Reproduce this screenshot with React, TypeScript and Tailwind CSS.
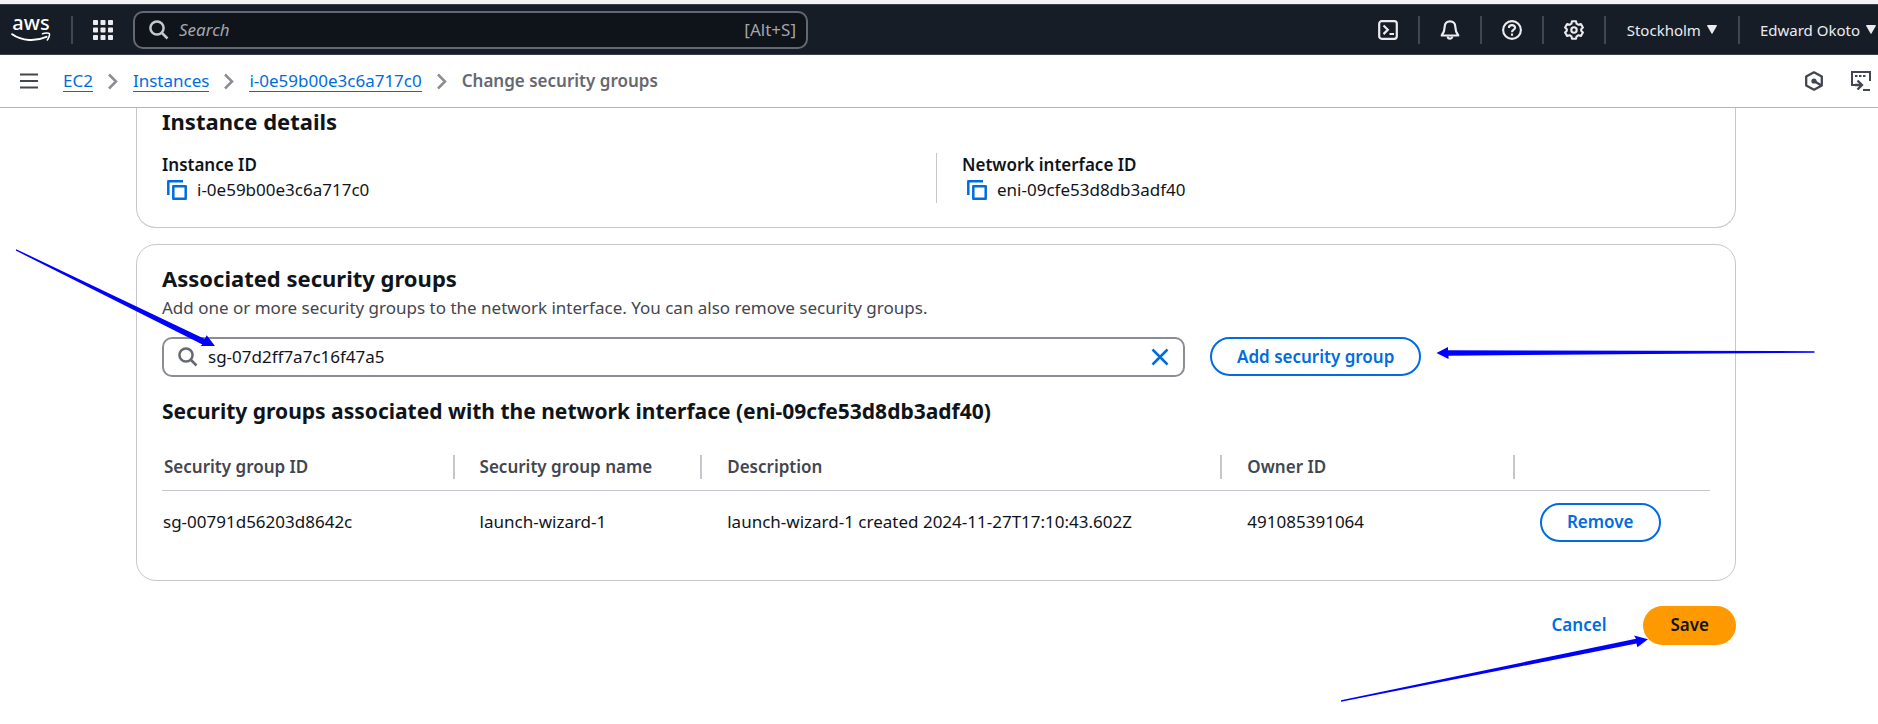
import React from "react";

const groups = [
  {
    id: "sg-00791d56203d8642c",
    name: "launch-wizard-1",
    description: "launch-wizard-1 created 2024-11-27T17:10:43.602Z",
    owner: "491085391064",
  },
];

function AwsLogo() {
  return (
    <a href="#home" aria-label="AWS home" className="flex w-10 flex-col items-center text-white">
      <span className="font-['Noto_Sans'] text-[20px] leading-[14px] font-medium">aws</span>
      <svg width="40" height="11" viewBox="0 0 40 11" fill="none" stroke="currentColor" className="mt-0.5">
        <path d="M1.2 2.2C11 9.2 24.500 9.600 35.500 4.800" strokeWidth="2" strokeLinecap="round" />
        <path d="M31.500 1.700C34 .8 37.500 .8 38.300 1.500C39 2.300 38 6 36.300 8" strokeWidth="1.600" strokeLinecap="round" />
      </svg>
    </a>
  );
}

function GridIcon() {
  const at = [0, 7.5, 15];
  return (
    <svg width="20" height="20" viewBox="0 0 20 20" fill="#ebebf0">
      {at.map((y) => at.map((x) => <rect key={`${x}-${y}`} x={x} y={y} width="5" height="5" rx=".8" />))}
    </svg>
  );
}

function SearchIcon({ className }: { className: string }) {
  return (
    <svg width="20" height="20" viewBox="0 0 20 20" fill="none" stroke="currentColor" strokeWidth="2.500" className={className}>
      <circle cx="8" cy="8" r="6.600" />
      <path d="M12.500 12.500l6 6" />
    </svg>
  );
}

function Chevron() {
  return (
    <svg width="10" height="17" viewBox="0 0 10 17" fill="none" stroke="#8c8c94" strokeWidth="2.500" className="shrink-0">
      <path d="M1 1.500l7 7-7 7" />
    </svg>
  );
}

function Caret() {
  return (
    <svg width="10" height="9" viewBox="0 0 10 9" fill="currentColor">
      <path d="M.8 0h8.400a.7.7 0 0 1 .6 1L5.600 8.300a.7.7 0 0 1-1.200 0L.2 1a.7.7 0 0 1 .6-1z" />
    </svg>
  );
}

function CopyIcon() {
  return (
    <svg width="20" height="20" viewBox="0 0 20 20" fill="none" stroke="#006ce0" strokeWidth="2.500" strokeLinejoin="round">
      <path d="M1.300 15V1.300H16" />
      <rect x="6.300" y="6.300" width="12.400" height="12.400" />
    </svg>
  );
}

function TerminalIcon() {
  return (
    <svg width="20" height="20" viewBox="0 0 20 20" fill="none" stroke="currentColor" strokeWidth="2.200">
      <rect x="1.200" y="1.200" width="17.600" height="17.600" rx="2.500" />
      <path d="M5.500 5.500l4.300 4.300-4.300 4.300M11.500 14h4.500" />
    </svg>
  );
}

function BellIcon() {
  return (
    <svg width="20" height="20" viewBox="0 0 20 20" fill="none" stroke="currentColor" strokeWidth="2.200" strokeLinejoin="round">
      <path d="M10 1.300C6.800 1.300 4.700 3.600 4.700 6.700C4.700 10.500 3.800 12.500 1.700 15.500H18.300C16.200 12.500 15.300 10.500 15.300 6.700C15.300 3.600 13.200 1.300 10 1.300z" />
      <path d="M7.800 16.500a2.200 2.200 0 0 0 4.400 0" />
    </svg>
  );
}

function HelpIcon() {
  return (
    <svg width="20" height="20" viewBox="0 0 20 20" fill="none" stroke="currentColor" strokeWidth="2.100">
      <circle cx="10" cy="10" r="8.900" />
      <path d="M6.900 8C6.900 6 8.200 5.100 10 5.100C11.900 5.100 13.100 6.200 13.100 7.700C13.100 9.800 10 9.700 10 12.300M10 13.600v2.200" />
    </svg>
  );
}

function GearIcon() {
  return (
    <svg width="20" height="20" viewBox="0 0 20 20" fill="none" stroke="currentColor" strokeWidth="2.100" strokeLinejoin="round">
      <path d="M8 1.200h4l.6 2.500 1.900 1.100 2.400-.8 2 3.500-1.700 1.700v1.600l1.700 1.700-2 3.500-2.400-.8-1.900 1.100-.6 2.500H8l-.6-2.500-1.900-1.100-2.400.8-2-3.500 1.700-1.700V9.200L1.100 7.500l2-3.500 2.400.8 1.900-1.100z" />
      <circle cx="10" cy="10" r="2.700" />
    </svg>
  );
}

function HexIcon() {
  return (
    <svg width="20" height="20" viewBox="0 0 20 20" fill="none" stroke="#424650" strokeWidth="2.300" strokeLinejoin="round">
      <path d="M10 1.300l7.800 4.300v8.800L10 18.700l-7.800-4.300V5.600z" />
      <circle cx="10" cy="10" r="2.600" fill="#424650" stroke="none" />
      <path d="M10 10l7 4.300" strokeWidth="2.500" />
    </svg>
  );
}

function ShellIcon() {
  return (
    <svg width="20" height="20" viewBox="0 0 20 20" fill="none" stroke="#424650" strokeWidth="2">
      <path d="M6 14H1V1h18v9" />
      <path d="M4 5h2.500M8 5h2.500M12 5h2.500" />
      <path d="M4 14h6M6.500 9.500l4.500 4.500-4.500 4.500" strokeWidth="2.300" />
      <path d="M12 19h7" />
    </svg>
  );
}

function Divider() {
  return <span className="h-7 w-0.5 shrink-0 bg-[#424650]" />;
}

function IconButton({ label, children }: { label: string; children: React.ReactNode }) {
  return (
    <button type="button" aria-label={label} className="flex w-[60px] items-center justify-center">
      {children}
    </button>
  );
}

function TopBar() {
  return (
    <header className="flex h-[51px] items-center border-y border-[#3a404b] bg-[#161d26] text-[#ebebf0]">
      <div className="flex items-center gap-5 pl-[11px]">
        <AwsLogo />
        <Divider />
        <button type="button" aria-label="Services">
          <GridIcon />
        </button>
      </div>
      <label className="ml-5 flex h-[38px] w-[675px] items-center rounded-[10px] border-2 border-[#656871] bg-[#0f141a] pr-[10px] pl-[14px]">
        <SearchIcon className="shrink-0 text-[#c6c6cd]" />
        <input
          type="search"
          aria-label="Search"
          placeholder="Search"
          className="ml-[10px] min-w-0 flex-1 bg-transparent text-[17px] outline-none placeholder:text-[#a4a4ad] placeholder:italic"
        />
        <span className="text-[17px] text-[#a4a4ad]">[Alt+S]</span>
      </label>
      <div className="ml-auto flex items-center pr-0.5 text-[15px]">
        <IconButton label="CloudShell"><TerminalIcon /></IconButton>
        <Divider />
        <IconButton label="Notifications"><BellIcon /></IconButton>
        <Divider />
        <IconButton label="Help"><HelpIcon /></IconButton>
        <Divider />
        <IconButton label="Settings"><GearIcon /></IconButton>
        <Divider />
        <button type="button" className="flex items-center gap-1.5 px-[21px]">
          Stockholm <Caret />
        </button>
        <Divider />
        <button type="button" className="flex items-center gap-1.5 pl-5">
          Edward Okoto <Caret />
        </button>
      </div>
    </header>
  );
}

function Breadcrumbs() {
  const link = "border-b border-[#006ce0] leading-[21px] text-[#006ce0]";
  return (
    <nav aria-label="Breadcrumbs" className="flex h-[53px] items-center border-b border-[#b4b4bb] pr-[7px] pl-5 text-[17px]">
      <button type="button" aria-label="Open navigation">
        <svg width="18" height="16" viewBox="0 0 18 16" fill="none" stroke="#424650" strokeWidth="2.200">
          <path d="M0 1.500h18M0 8h18M0 14.500h18" />
        </svg>
      </button>
      <ol className="ml-[25px] flex items-center gap-[15px]">
        <li className="flex items-center gap-[15px]"><a href="#ec2" className={link}>EC2</a><Chevron /></li>
        <li className="flex items-center gap-[15px]"><a href="#instances" className={link}>Instances</a><Chevron /></li>
        <li className="flex items-center gap-[15px]"><a href="#instance" className={link}>i-0e59b00e3c6a717c0</a><Chevron /></li>
        <li className="font-semibold text-[#656871]">Change security groups</li>
      </ol>
      <div className="ml-auto flex items-center gap-[27px]">
        <button type="button" aria-label="Amazon Q"><HexIcon /></button>
        <button type="button" aria-label="CloudShell panel"><ShellIcon /></button>
      </div>
    </nav>
  );
}

function Detail({ label, value }: { label: string; value: string }) {
  return (
    <div>
      <dt className="leading-6 font-semibold">{label}</dt>
      <dd className="flex h-[26px] items-center gap-[10px] pl-[5px]">
        <button type="button" aria-label={`Copy ${label}`}><CopyIcon /></button>
        {value}
      </dd>
    </div>
  );
}

function HeadCell({ children, last = false }: { children?: React.ReactNode; last?: boolean }) {
  return (
    <th className="h-[46px] p-0 pl-[25px] text-left leading-6 font-semibold text-[#424650] first:pl-0.5">
      <div className="flex items-center justify-between">
        <span>{children}</span>
        {!last && <span className="h-6 w-0.5 bg-[#c6c6cd]" />}
      </div>
    </th>
  );
}

function Arrows() {
  return (
    <svg aria-hidden="true" width="1878" height="724" className="pointer-events-none absolute top-0 left-0" fill="#0000ff">
      <path d="M16.200 249.200L204.800 339L206.700 335.300L215 346L200.500 346L202.400 344.500L15.800 250.600Z" />
      <path d="M1814.500 351.200L1448 350.300V347L1436.500 353L1448.500 359V355.700L1814.500 352.700Z" />
      <path d="M1341 700.200L1636 638.800L1634 635.500L1648 639.300L1637.300 647.300L1636.500 643.500L1341 701.700Z" />
    </svg>
  );
}

export default function App() {
  const outline = "h-[39px] rounded-[20px] border-2 border-[#006ce0] px-[25px] font-semibold text-[#006ce0]";
  return (
    <div className="relative min-h-screen overflow-x-hidden bg-white font-['Noto_Sans',sans-serif] text-[17px] leading-6 text-[#0f141a]">
      <div className="h-1 bg-[#f3f3f3]" />
      <TopBar />
      <Breadcrumbs />
      <main className="pr-[142px] pl-[136px]">
        <section className="rounded-b-[20px] border border-t-0 border-[#c6c6cd] px-[25px] pb-6">
          <h2 className="text-[22px] leading-[26px] font-bold">Instance details</h2>
          <dl className="mt-[19px] grid grid-cols-2">
            <Detail label="Instance ID" value="i-0e59b00e3c6a717c0" />
            <div className="border-l border-[#c6c6cd] pl-[25px]">
              <Detail label="Network interface ID" value="eni-09cfe53d8db3adf40" />
            </div>
          </dl>
        </section>

        <section className="mt-4 rounded-[20px] border border-[#c6c6cd] px-[25px] pt-5 pb-[26px]">
          <h2 className="text-[22px] leading-[26px] font-bold">Associated security groups</h2>
          <p className="mt-[5px] leading-6 text-[#424650]">
            Add one or more security groups to the network interface. You can also remove security groups.
          </p>
          <div className="mt-[17px] flex gap-[25px]">
            <label className="flex h-10 w-[1023px] items-center rounded-[10px] border-2 border-[#8c8c94] pr-[14px] pl-[14px]">
              <SearchIcon className="shrink-0 text-[#656871]" />
              <input
                type="text"
                aria-label="Security group"
                defaultValue="sg-07d2ff7a7c16f47a5"
                className="ml-[10px] min-w-0 flex-1 bg-transparent outline-none"
              />
              <button type="button" aria-label="Clear">
                <svg width="18" height="18" viewBox="0 0 18 18" fill="none" stroke="#006ce0" strokeWidth="2.500">
                  <path d="M1.500 1.500l15 15M16.500 1.500l-15 15" />
                </svg>
              </button>
            </label>
            <button type="button" className={outline}>Add security group</button>
          </div>
          <h3 className="mt-[21px] text-[21px] leading-[26px] font-bold">
            Security groups associated with the network interface (eni-09cfe53d8db3adf40)
          </h3>
          <table className="mt-5 w-full table-fixed border-collapse">
            <colgroup>
              <col className="w-[18.9%]" />
              <col className="w-[16%]" />
              <col className="w-[33.6%]" />
              <col className="w-[18.9%]" />
              <col />
            </colgroup>
            <thead>
              <tr className="border-b border-[#c6c6cd]">
                <HeadCell>Security group ID</HeadCell>
                <HeadCell>Security group name</HeadCell>
                <HeadCell>Description</HeadCell>
                <HeadCell>Owner ID</HeadCell>
                <HeadCell last />
              </tr>
            </thead>
            <tbody>
              {groups.map((g) => (
                <tr key={g.id}>
                  <td className="py-3 pl-px">{g.id}</td>
                  <td className="py-3 pl-[25px]">{g.name}</td>
                  <td className="py-3 pl-[25px]">{g.description}</td>
                  <td className="py-3 pl-[25px]">{g.owner}</td>
                  <td className="py-3 pl-[25px]">
                    <button type="button" className={`${outline} block`}>Remove</button>
                  </td>
                </tr>
              ))}
            </tbody>
          </table>
        </section>

        <div className="mt-[25px] flex justify-end gap-[10px] font-semibold">
          <button type="button" className="h-[39px] px-[27px] text-[#006ce0]">Cancel</button>
          <button type="button" className="h-[39px] rounded-[20px] bg-[#ff9900] px-[27px]">Save</button>
        </div>
      </main>
      <Arrows />
    </div>
  );
}
